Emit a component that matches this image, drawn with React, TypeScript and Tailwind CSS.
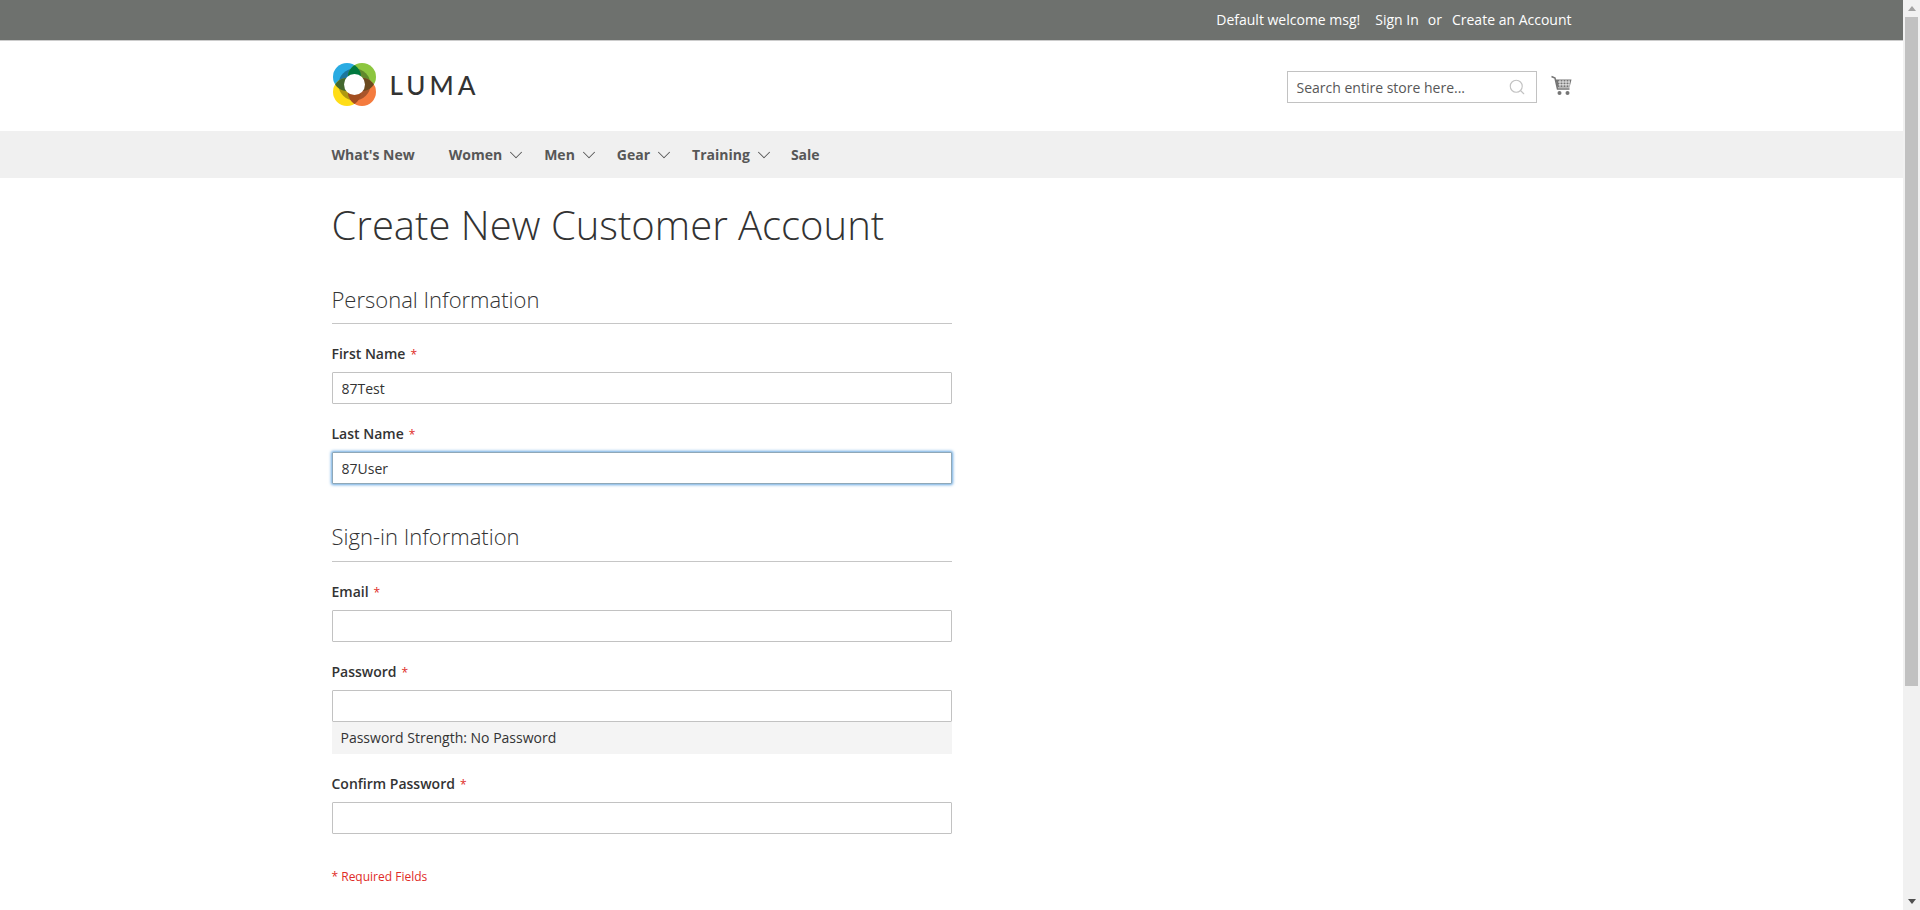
import { ChevronDown, Search } from "lucide-react";

// Store logo: four overlapping circles around a white hole
function LumaLogo() {
  return (
    <div className="flex items-center ml-px">
      <svg width="43" height="43" viewBox="0 0 43 43" className="shrink-0">
        <defs>
          <clipPath id="clip-blue">
            <circle cx="14" cy="14" r="14" />
          </clipPath>
          <clipPath id="clip-orange">
            <circle cx="29" cy="29" r="14" />
          </clipPath>
        </defs>
        <g className="isolate">
          <circle cx="14" cy="14" r="14" fill="#29abe2" />
          <circle cx="29" cy="14" r="14" fill="#8cc63f" />
          <circle cx="14" cy="29" r="14" fill="#ffdd17" />
          <circle cx="29" cy="29" r="14" fill="#f47b3e" />
          <circle cx="21.5" cy="21.5" r="16" fill="#b0b0b0" className="mix-blend-multiply" />
        </g>
        <circle cx="29" cy="14" r="14" fill="#00793f" clipPath="url(#clip-blue)" />
        <circle cx="14" cy="29" r="14" fill="#44682f" clipPath="url(#clip-blue)" />
        <circle cx="29" cy="14" r="14" fill="#6b4a1f" clipPath="url(#clip-orange)" />
        <circle cx="14" cy="29" r="14" fill="#a34e20" clipPath="url(#clip-orange)" />
        <circle cx="21.5" cy="21.5" r="10.5" fill="#ffffff" />
      </svg>
      <span className="ml-[14px] text-[26px] leading-none font-medium tracking-[4px] text-[#333333] font-['Lato',sans-serif]">
        LUMA
      </span>
    </div>
  );
}

function CartIcon() {
  return (
    <svg width="21" height="21" viewBox="0 0 21 21" className="shrink-0">
      <path d="M0.5 1.5L4 3L6.5 14H18.5" fill="none" stroke="#757575" strokeWidth="1.5" />
      <path d="M4.5 4.5H20.5L18.5 12.5H6.5Z" fill="#757575" />
      <path d="M7 7H19M7.5 9.8H18.5M9 5V12M12 5V12M15 5V12M18 5V12" stroke="#ffffff" strokeWidth="0.8" />
      <circle cx="8.5" cy="18" r="2" fill="#757575" />
      <circle cx="16.5" cy="18" r="2" fill="#757575" />
    </svg>
  );
}

const navItems = [
  { label: "What's New", caret: false, gap: "mr-[34px]" },
  { label: "Women", caret: true, gap: "mr-[17px]" },
  { label: "Men", caret: true, gap: "mr-[17px]" },
  { label: "Gear", caret: true, gap: "mr-[17px]" },
  { label: "Training", caret: true, gap: "mr-[16px]" },
  { label: "Sale", caret: false, gap: "" },
];

function Label({ text }: { text: string }) {
  return (
    <label className="block h-[20px] leading-[20px] text-[14px] font-semibold text-[#333333]">
      {text}
      <span className="ml-[5px] text-[#e02b27] text-[12px] font-normal">*</span>
    </label>
  );
}

function TextInput({ value, focused }: { value?: string; focused?: boolean }) {
  return (
    <input
      readOnly
      value={value ?? ""}
      className={
        focused
          ? "block w-full h-[32px] px-[9px] bg-white border border-[#8fa8b8] rounded-[1px] shadow-[0_0_3px_1px_#68a8e0] text-[14px] text-[#333333] outline-none"
          : "block w-full h-[32px] px-[9px] bg-white border border-[#c2c2c2] rounded-[1px] text-[14px] text-[#333333] outline-none"
      }
    />
  );
}

function SectionTitle({ text, tight }: { text: string; tight?: boolean }) {
  return (
    <div
      className={
        tight
          ? "h-[42px] pt-[2px] border-b border-[#c6c6c6] text-[22px] leading-[28px] font-light text-[#333333]"
          : "h-[42px] pt-[3px] border-b border-[#c6c6c6] text-[22px] leading-[28px] font-light text-[#333333]"
      }
    >
      {text}
    </div>
  );
}

export default function App() {
  return (
    <div className="flex h-[910px] overflow-hidden bg-white font-['Open_Sans',sans-serif]">
      <div className="flex-1 min-w-0">
        {/* top panel */}
        <div className="h-[41px] bg-[#6e716e] border-b border-[#cccccc]">
          <div className="w-[1280px] mx-auto px-[20px] h-[40px] pb-[2px] flex items-center justify-end text-[14px] text-white">
            <span>Default welcome msg!</span>
            <span className="ml-[15px]">Sign In</span>
            <span className="ml-[9px]">or</span>
            <span className="ml-[10px]">Create an Account</span>
          </div>
        </div>

        {/* logo, search, cart */}
        <div className="h-[90px] w-[1280px] mx-auto px-[20px] flex items-start justify-between">
          <div className="pt-[22px]">
            <LumaLogo />
          </div>
          <div className="flex items-start pt-[30px]">
            <div className="relative w-[250px] h-[32px] border border-[#c2c2c2] bg-white pl-[9px] flex items-center text-[14px] text-[#575757]">
              Search entire store here...
              <Search className="absolute right-[10px] top-[6px] w-[18px] h-[18px] text-[#c2c2c2]" strokeWidth={1.5} />
            </div>
            <div className="ml-[14px] pt-[4px]">
              <CartIcon />
            </div>
          </div>
        </div>

        {/* main nav */}
        <div className="h-[47px] bg-[#f0f0f0]">
          <div className="w-[1280px] mx-auto px-[20px] h-full flex items-center text-[14px] font-bold text-[#575757]">
            {navItems.map((item) => (
              <div key={item.label} className={`flex items-center ${item.gap}`}>
                {item.label}
                {item.caret && <ChevronDown className="ml-[3px] w-[22px] h-[22px] text-[#575757]" strokeWidth={1.1} />}
              </div>
            ))}
          </div>
        </div>

        {/* page */}
        <div className="w-[1280px] mx-auto px-[20px]">
          <h1 className="pt-[20px] text-[40px] leading-[54px] font-light text-[#333333]">Create New Customer Account</h1>

          <form className="w-[620px] mt-[30px]">
            <SectionTitle text="Personal Information" />
            <div className="mt-[20px]">
              <Label text="First Name" />
              <div className="mt-[8px]">
                <TextInput value="87Test" />
              </div>
            </div>
            <div className="mt-[20px]">
              <Label text="Last Name" />
              <div className="mt-[8px]">
                <TextInput value="87User" focused />
              </div>
            </div>

            <div className="mt-[36px]">
              <SectionTitle text="Sign-in Information" tight />
            </div>
            <div className="mt-[20px]">
              <Label text="Email" />
              <div className="mt-[8px]">
                <TextInput />
              </div>
            </div>
            <div className="mt-[20px]">
              <Label text="Password" />
              <div className="mt-[8px]">
                <TextInput />
              </div>
              <div className="h-[32px] pb-[2px] bg-[#f4f4f4] pl-[9px] flex items-center text-[14px] text-[#333333]">
                Password Strength: No Password
              </div>
            </div>
            <div className="mt-[20px]">
              <Label text="Confirm Password" />
              <div className="mt-[8px]">
                <TextInput />
              </div>
            </div>
            <div className="mt-[35px] text-[12px] leading-[16px] text-[#e02b27]">* Required Fields</div>
          </form>
        </div>
      </div>

      {/* window scrollbar */}
      <div className="w-[17px] shrink-0 bg-[#f1f1f1] flex flex-col items-center">
        <svg width="8" height="5" viewBox="0 0 8 5" className="mt-[6px] shrink-0">
          <path d="M4 0L8 5H0Z" fill="#a3a3a3" />
        </svg>
        <div className="w-[13px] h-[669px] mt-[6px] bg-[#c1c1c1]" />
        <div className="flex-1" />
        <svg width="8" height="5" viewBox="0 0 8 5" className="mb-[6px] shrink-0">
          <path d="M0 0H8L4 5Z" fill="#505050" />
        </svg>
      </div>
    </div>
  );
}
